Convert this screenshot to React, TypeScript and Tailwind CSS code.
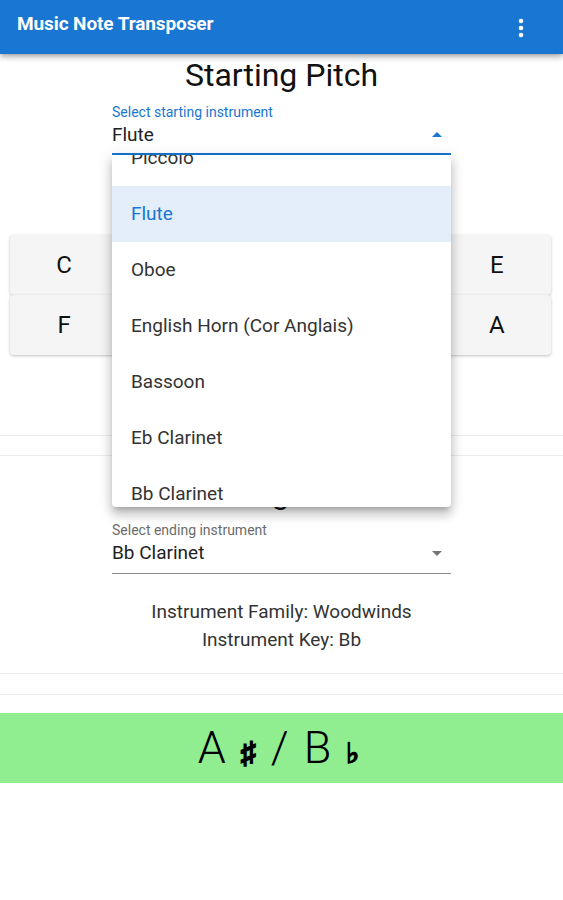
import React from 'react';

const notes = ['C', 'C♯/D♭', 'D', 'D♯/E♭', 'E', 'F', 'F♯/G♭', 'G', 'G♯/A♭', 'A', 'A♯/B♭', 'B'];

const menuItems = [
  'Piccolo',
  'Flute',
  'Oboe',
  'English Horn (Cor Anglais)',
  'Bassoon',
  'Eb Clarinet',
  'Bb Clarinet',
  'Bass Clarinet',
];

const ArrowDrop = ({ up, color }: { up?: boolean; color: string }) => (
  <svg viewBox="0 0 24 24" className={`w-6 h-6 ${up ? 'rotate-180' : ''}`} fill={color}>
    <path d="M7 10l5 5 5-5z" />
  </svg>
);

const Divider = ({ className }: { className: string }) => <div className={`h-px bg-[#ececec] ${className}`} />;

export default function App() {
  return (
    <div className="w-[563px] min-h-[900px] bg-white font-['Roboto',sans-serif] text-[#222]">
      {/* App bar */}
      <div className="relative z-10 h-[54px] bg-[#1976d2] flex items-center justify-between pl-[17px] pr-[37px] shadow-[0_2px_4px_-1px_rgba(0,0,0,0.2),0_4px_5px_0_rgba(0,0,0,0.14),0_1px_10px_0_rgba(0,0,0,0.12)]">
        <span className="self-start mt-[12px] leading-6 text-[19px] font-bold text-white tracking-[-0.1px]">
          Music Note Transposer
        </span>
        <svg viewBox="0 0 10 24" className="w-[10px] h-[24px] mt-[2px]" fill="white">
          <circle cx="5" cy="5" r="2.3" />
          <circle cx="5" cy="12" r="2.3" />
          <circle cx="5" cy="19" r="2.3" />
        </svg>
      </div>

      {/* Starting pitch */}
      <h1 className="mt-[3px] text-center text-[32px] leading-[36px] font-normal text-[#111]">Starting Pitch</h1>
      <div className="relative z-20 mx-auto w-[339px] mt-[11px]">
        <div className="text-[14px] leading-4 text-[#1976d2]">Select starting instrument</div>
        <div className="flex items-center justify-between pt-[3px] pb-[6px] border-b-2 border-[#1976d2]">
          <span className="text-[19px] leading-6 text-[#222]">Flute</span>
          <span className="mr-[2px]">
            <ArrowDrop up color="#1976d2" />
          </span>
        </div>

        {/* Open menu */}
        <div className="absolute left-0 right-0 top-full h-[352px] overflow-hidden bg-white rounded-b-[4px] shadow-[0_5px_5px_-3px_rgba(0,0,0,0.2),0_8px_10px_1px_rgba(0,0,0,0.14),0_3px_14px_2px_rgba(0,0,0,0.12)]">
          <ul className="-mt-[25px]">
            {menuItems.map((item) => (
              <li
                key={item}
                className={`h-[56px] flex items-center pl-[19px] text-[19px] ${
                  item === 'Flute' ? 'bg-[#e3eefa] text-[#1976d2]' : 'text-[#333]'
                }`}
              >
                {item}
              </li>
            ))}
          </ul>
        </div>
      </div>

      {/* Note buttons */}
      <div className="mt-[80px] ml-[10px] mr-[12px] flex flex-wrap justify-center">
        {notes.map((n) => (
          <button
            key={n}
            className="w-1/5 h-[60px] bg-[#f5f5f5] rounded-[4px] shadow-[0_1px_3px_rgba(0,0,0,0.25)] text-[24px] text-[#111] flex items-center justify-center"
          >
            {n}
          </button>
        ))}
      </div>

      <Divider className="mt-[20px]" />
      <Divider className="mt-[19px]" />

      {/* Ending pitch */}
      <h2 className="mt-[19px] text-center text-[32px] leading-[36px] font-normal text-[#111]">Ending Pitch</h2>
      <div className="mx-auto w-[339px] mt-[11px]">
        <div className="text-[14px] leading-4 text-[#6b6b6b]">Select ending instrument</div>
        <div className="flex items-center justify-between pt-[3px] pb-[8px] border-b border-[#8c8c8c]">
          <span className="text-[19px] leading-6 text-[#222]">Bb Clarinet</span>
          <span className="mr-[2px]">
            <ArrowDrop color="#757575" />
          </span>
        </div>
      </div>

      <div className="mt-[24px] text-center text-[19px] leading-[28px] text-[#333]">
        <div>Instrument Family: Woodwinds</div>
        <div>Instrument Key: Bb</div>
      </div>

      <Divider className="mt-[19px]" />
      <Divider className="mt-[20px]" />

      {/* Result */}
      <div className="mt-[18px] h-[70px] bg-[#90ee90] flex items-baseline justify-center gap-[15px] pt-[6px] pr-[6px] text-[45px] leading-[58px] font-light text-black">
        <span>A</span>
        <span className="text-[30px] font-['DejaVu_Sans',sans-serif] [-webkit-text-stroke:1.8px_black]">♯</span>
        <span>/</span>
        <span>B</span>
        <span className="text-[28px] font-['DejaVu_Sans',sans-serif] [-webkit-text-stroke:1.6px_black]">♭</span>
      </div>
    </div>
  );
}
